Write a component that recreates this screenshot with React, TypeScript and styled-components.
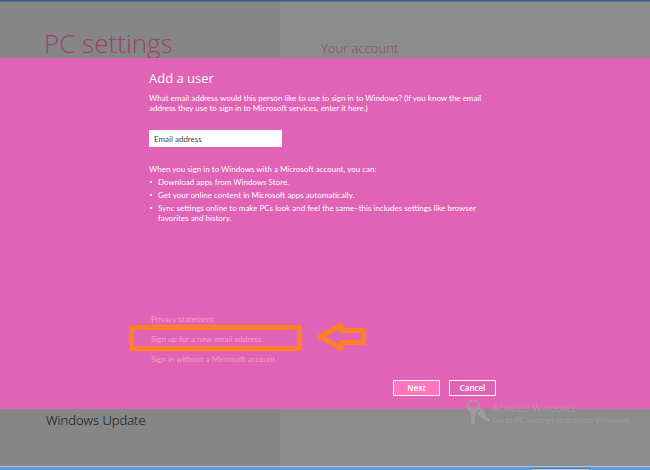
import React from "react";
import styled, { createGlobalStyle } from "styled-components";

const GlobalStyle = createGlobalStyle`
  *, *::before, *::after { box-sizing: border-box; }
  body {
    margin: 0;
    font-family: Lato, "Noto Sans", sans-serif;
    font-size: 8px;
    line-height: 10px;
  }
  h1, h2, p, ul { margin: 0; padding: 0; font-weight: 400; }
`;

const headingFont = `"Open Sans", "Noto Sans", sans-serif`;

const Screen = styled.div`
  position: relative;
  display: flex;
  flex-direction: column;
  min-height: 100vh;
  background: #868686;
`;

const TopEdge = styled.div`
  height: 2px;
  background: #2f5f96;
  border-bottom: 1px solid #5a7187;
`;

const Split = styled.div<{ $grow?: boolean }>`
  display: grid;
  grid-template-columns: 280px 1fr;
  flex: ${(p) => (p.$grow ? "1 0 auto" : "none")};
`;

const Sidebar = styled.div`
  padding-left: 44px;
  background: #868686;
`;

const Pane = styled.div`
  padding-left: 41px;
  background: #8c8c8c;
`;

const PageTitle = styled.h1`
  padding-top: 26px;
  font-family: ${headingFont};
  font-size: 26px;
  line-height: 30px;
  font-weight: 300;
  white-space: nowrap;
  color: #95436f;
`;

const PaneTitle = styled.h2`
  padding-top: 37px;
  font-family: ${headingFont};
  font-size: 13px;
  line-height: 18px;
  font-weight: 300;
  color: #8e3f6b;
`;

const NavItem = styled.p`
  padding: 2px 0 0 2px;
  font-family: ${headingFont};
  font-size: 13px;
  line-height: 18px;
  font-weight: 300;
  color: #080808;
`;

const Dialog = styled.form`
  display: flex;
  flex-direction: column;
  min-height: 351px;
  padding: 10px 154px 13px 149px;
  background: #e063b6;
  color: #fff;
`;

const DialogTitle = styled.h2`
  font-family: ${headingFont};
  font-size: 13px;
  line-height: 20px;
`;

const Copy = styled.p`
  margin-top: 5px;
`;

const EmailInput = styled.input`
  width: 133px;
  height: 17px;
  margin: 17px 0;
  padding: 0 5px;
  border: 0;
  border-radius: 0;
  background: #fff;
  font: inherit;
  color: #444;
  &::placeholder { color: #444; opacity: 1; }
`;

const Benefits = styled.ul`
  display: grid;
  gap: 3px;
  margin-top: 3px;
  list-style: none;
`;

const Benefit = styled.li`
  display: grid;
  grid-template-columns: 8px 1fr;
  column-gap: 1px;
  &::before {
    content: "";
    width: 2px;
    height: 2px;
    margin: 4px 0 0 1px;
    background: #fff;
  }
`;

const Links = styled.nav`
  display: flex;
  flex-direction: column;
  align-items: flex-start;
  gap: 10px;
  margin-top: auto;
  padding-left: 2px;
`;

const LinkRow = styled.div`
  position: relative;
`;

const TextLink = styled.a`
  display: block;
  color: #fb9dcf;
  text-decoration: none;
  white-space: nowrap;
`;

const Highlight = styled.div`
  position: absolute;
  top: -9px;
  left: -22px;
  width: 173px;
  height: 26px;
  border: 5px solid #ff7f27;
  pointer-events: none;
`;

const Arrow = styled.svg`
  position: absolute;
  top: -13px;
  left: 166px;
`;

const Actions = styled.div`
  display: flex;
  justify-content: flex-end;
  gap: 9px;
  margin-top: 16px;
`;

const Button = styled.button<{ $primary?: boolean }>`
  width: 47px;
  height: 16px;
  padding: 0;
  border: 1px solid #fff;
  border-radius: 0;
  background: ${(p) => (p.$primary ? "#ff76bc" : "transparent")};
  color: #fff;
  font: inherit;
  font-family: ${headingFont};
  font-weight: 600;
`;

const Watermark = styled.div`
  position: absolute;
  left: 466px;
  top: 399px;
  display: flex;
  gap: 3px;
  color: rgba(170, 170, 170, 0.6);
  white-space: nowrap;
`;

const WatermarkTitle = styled.p`
  padding-top: 3px;
  font-family: ${headingFont};
  font-size: 10px;
  line-height: 13px;
`;

const Taskbar = styled.div`
  display: flex;
  justify-content: flex-end;
  height: 4px;
  padding-right: 61px;
  background: #6199d3;
  border-top: 1px solid #a9c6e6;
`;

const TaskPreview = styled.div`
  width: 57px;
  margin-top: 1px;
  background: #bcd3eb;
  border-top: 1px solid #48749f;
`;

const benefits = [
  "Download apps from Windows Store.",
  "Get your online content in Microsoft apps automatically.",
  "Sync settings online to make PCs look and feel the same–this includes settings like browser favorites and history.",
];

function Keys() {
  return (
    <svg width="24" height="27" viewBox="0 0 24 27" fill="#a3a3a3" fillOpacity="0.75" aria-hidden="true">
      <path d="M12 14 L14 12 V9 L17 10 L19 12 L18 14 L20 16 V18 L24 21 V23 L20 22 L12 16Z" />
      <path
        fillRule="evenodd"
        d="M7 0.5C11 0.5 14 3.5 14 7.5C14 10.5 12 12.5 9.5 13.5V16L8.5 17L9.5 18.5L8.5 20L9 22V24L7 26L5 24V13.5C2 12.5 0.5 10.5 0.5 7.5C0.5 3.5 3 0.5 7 0.5ZM7 2C4.5 2 2.5 4 2.5 7L5 8.5H9.5L12 7C12 4 9.5 2 7 2Z"
      />
    </svg>
  );
}

export default function App() {
  return (
    <>
      <GlobalStyle />
      <Screen>
        <TopEdge />
        <Split>
          <Sidebar>
            <PageTitle>PC settings</PageTitle>
          </Sidebar>
          <Pane>
            <PaneTitle>Your account</PaneTitle>
          </Pane>
        </Split>
        <Dialog onSubmit={(e) => e.preventDefault()}>
          <DialogTitle>Add a user</DialogTitle>
          <Copy>
            What email address would this person like to use to sign in to Windows? (If you know the email address they
            use to sign in to Microsoft services, enter it here.)
          </Copy>
          <EmailInput type="email" aria-label="Email address" placeholder="Email address" />
          <p>When you sign in to Windows with a Microsoft account, you can:</p>
          <Benefits>
            {benefits.map((text) => (
              <Benefit key={text}>{text}</Benefit>
            ))}
          </Benefits>
          <Links>
            <TextLink href="#privacy">Privacy statement</TextLink>
            <LinkRow>
              <TextLink href="#sign-up">Sign up for a new email address</TextLink>
              <Highlight />
              <Arrow width="50" height="31" viewBox="0 0 50 31" aria-hidden="true">
                <path
                  d="M3 15.5 L24 4 V9.5 H46.5 V21.5 H24 V27.5 Z"
                  fill="none"
                  stroke="#ff7f27"
                  strokeWidth="5"
                  strokeLinejoin="round"
                />
              </Arrow>
            </LinkRow>
            <TextLink href="#local-account">Sign in without a Microsoft account</TextLink>
          </Links>
          <Actions>
            <Button type="submit" $primary>
              Next
            </Button>
            <Button type="button">Cancel</Button>
          </Actions>
        </Dialog>
        <Split $grow>
          <Sidebar>
            <NavItem>Windows Update</NavItem>
          </Sidebar>
          <Pane />
        </Split>
        <Taskbar>
          <TaskPreview />
        </Taskbar>
        <Watermark>
          <Keys />
          <div>
            <WatermarkTitle>Activate Windows</WatermarkTitle>
            <p>Go to PC settings to activate Windows.</p>
          </div>
        </Watermark>
      </Screen>
    </>
  );
}
